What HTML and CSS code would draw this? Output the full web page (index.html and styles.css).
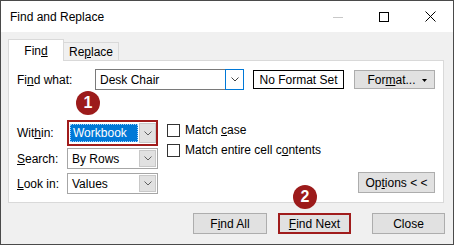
FILE: index.html
```html
<!DOCTYPE html>
<html>
<head>
<meta charset="utf-8">
<link rel="stylesheet" href="styles.css">
</head>
<body>
<div class="window">
  <div class="titlebar">
    <span class="title">Find and Replace</span>
    <div class="controls">
      <span class="ctl"><svg width="10" height="10" viewBox="0 0 10 10"><line x1="0" y1="5.5" x2="10" y2="5.5" stroke="#c8c8c8" stroke-width="1"/></svg></span>
      <span class="ctl"><svg width="10" height="10" viewBox="0 0 10 10"><rect x="0.5" y="0.5" width="9" height="9" fill="none" stroke="#000" stroke-width="1"/></svg></span>
      <span class="ctl"><svg width="11" height="11" viewBox="0 0 11 11"><path d="M0.5 0.5 L10.5 10.5 M10.5 0.5 L0.5 10.5" stroke="#000" stroke-width="1" fill="none"/></svg></span>
    </div>
  </div>
  <div class="body">
    <div class="tabs">
      <div class="tab active">Fin<u>d</u></div>
      <div class="tab">Re<u>p</u>lace</div>
    </div>
    <div class="panel">
      <div class="row1">
        <span class="lbl wide">Fi<u>n</u>d what:</span>
        <div class="combo findwhat">
          <span class="val">Desk Chair</span>
          <span class="arrow focus"><svg width="8" height="5" viewBox="0 0 8 5"><polyline points="0.5,0.5 4,4 7.5,0.5" fill="none" stroke="#404040" stroke-width="1"/></svg></span>
        </div>
        <div class="fmtset">No Format Set</div>
        <div class="btn fmt"><span>For<u>m</u>at...</span><svg class="caret" width="5" height="3" viewBox="0 0 5 3"><polygon points="0,0 5,0 2.5,3" fill="#000"/></svg></div>
      </div>
      <div class="row2">
        <div class="opts">
          <div class="optrow">
            <span class="lbl">Wit<u>h</u>in:</span>
            <div class="combo sel redframe">
              <span class="hl">Workbook</span>
              <span class="arrow"><svg width="8" height="5" viewBox="0 0 8 5"><polyline points="0.5,0.5 4,4 7.5,0.5" fill="none" stroke="#606060" stroke-width="1"/></svg></span>
            </div>
          </div>
          <div class="optrow search">
            <span class="lbl"><u>S</u>earch:</span>
            <div class="combo sel">
              <span class="val">By Rows</span>
              <span class="arrow"><svg width="8" height="5" viewBox="0 0 8 5"><polyline points="0.5,0.5 4,4 7.5,0.5" fill="none" stroke="#606060" stroke-width="1"/></svg></span>
            </div>
          </div>
          <div class="optrow lookin">
            <span class="lbl"><u>L</u>ook in:</span>
            <div class="combo sel">
              <span class="val">Values</span>
              <span class="arrow"><svg width="8" height="5" viewBox="0 0 8 5"><polyline points="0.5,0.5 4,4 7.5,0.5" fill="none" stroke="#606060" stroke-width="1"/></svg></span>
            </div>
          </div>
        </div>
        <div class="checks">
          <div class="check"><span class="box"></span><span>Match <u>c</u>ase</span></div>
          <div class="check"><span class="box"></span><span>Match entire cell c<u>o</u>ntents</span></div>
        </div>
        <div class="btn options">Op<u>t</u>ions &lt; &lt;</div>
      </div>
    </div>
    <div class="actions">
      <div class="btn act findall">F<u>i</u>nd All</div>
      <div class="btn act findnext"><u>F</u>ind Next</div>
      <div class="btn act close">Close</div>
    </div>
  </div>
  <div class="badge b1">1</div>
  <div class="badge b2">2</div>
</div>
</body>
</html>
```
FILE: styles.css
```css
* { box-sizing: border-box; }
html, body { margin: 0; padding: 0; background: #fff; }
body {
  font-family: "Liberation Sans", Arial, sans-serif;
  font-size: 12px;
  color: #000;
}
u { text-decoration: underline; text-underline-offset: 1px; }

.window {
  position: relative;
  width: 454px;
  height: 245px;
  border: 1px solid #4a4a4a;
  background: #f0f0f0;
  display: flex;
  flex-direction: column;
}

.titlebar {
  height: 31px;
  background: #fff;
  display: flex;
  align-items: center;
  justify-content: space-between;
  padding-left: 9px;
}
.title { font-size: 12px; }
.controls { display: flex; height: 31px; }
.ctl {
  width: 46px;
  height: 31px;
  display: flex;
  align-items: center;
  justify-content: center;
}

.body {
  padding: 7px 8px 0 7px;
  display: flex;
  flex-direction: column;
}

.tabs {
  display: flex;
  align-items: flex-end;
  height: 21px;
}
.tab {
  width: 56px;
  height: 18px;
  margin-left: -1px;
  border: 1px solid #d9d9d9;
  border-bottom: none;
  background: #f0f0f0;
  display: flex;
  align-items: center;
  justify-content: center;
  padding-top: 1px;
}
.tab.active {
  width: 56px;
  margin-left: 0;
  height: 22px;
  margin-bottom: -1px;
  background: #fff;
  position: relative;
  z-index: 1;
  padding-top: 0;
}

.panel {
  width: 436px;
  height: 143px;
  background: #fff;
  border: 1px solid #d9d9d9;
  padding: 8px 8px 0 8px;
}

.row1 {
  display: flex;
  align-items: center;
  height: 21px;
}
.lbl { width: 50px; flex: none; }
.lbl.wide { width: 78px; }

.combo {
  display: flex;
  height: 21px;
  border: 1px solid #a6a6a6;
  background: #fff;
  align-items: stretch;
}
.combo .val {
  flex: 1;
  display: flex;
  align-items: center;
  padding-left: 4px;
}
.combo .arrow {
  width: 18px;
  display: flex;
  align-items: center;
  justify-content: center;
  background: #e1e1e1;
  border-left: 1px solid #c4c4c4;
}
.findwhat { width: 149px; border-color: #7a7a7a; }
.findwhat .arrow {
  background: #fff;
  border: 1px solid #0078d7;
  margin: -1px -1px -1px 0;
  width: 19px;
}

.fmtset {
  margin-left: 9px;
  width: 91px;
  height: 19px;
  border: 1px solid #000;
  display: flex;
  align-items: center;
  justify-content: center;
}

.btn {
  background: #e1e1e1;
  border: 1px solid #adadad;
  display: flex;
  align-items: center;
  justify-content: center;
}
.fmt {
  margin-left: 10px;
  width: 81px;
  height: 19px;
  position: relative;
  padding-right: 6px;
}
.fmt .caret { position: absolute; right: 7px; top: 8px; }

.row2 {
  display: flex;
  margin-top: 30px;
}
.opts { display: flex; flex-direction: column; }
.optrow { display: flex; align-items: center; }
.optrow.search { margin-top: 2px; }
.optrow.lookin { margin-top: 4px; }
.sel { width: 91px; }
.sel .arrow { margin: 1px 1px 1px 0; border: 1px solid #c8c8c8; width: 17px; }

.redframe {
  height: 26px;
  border: 2px solid #a01c1c;
  padding: 2px 0 2px 1px;
}
.redframe .hl {
  flex: 1;
  background: #0078d7;
  color: #fff;
  display: flex;
  align-items: center;
  padding-left: 2px;
  border: 1px dotted #9fd0ff;
}
.redframe .arrow {
  margin: -1px 0 -1px 1px;
  width: 17px;
}

.checks {
  margin-left: 9px;
  display: flex;
  flex-direction: column;
}
.check {
  height: 20px;
  display: flex;
  align-items: center;
}
.check .box {
  width: 13px;
  height: 13px;
  border: 1px solid #333;
  background: #fff;
  margin-right: 5px;
}

.options {
  margin-left: auto;
  align-self: flex-end;
  margin-bottom: 1px;
  width: 77px;
  height: 21px;
}

.actions {
  display: flex;
  justify-content: flex-end;
  margin-top: 10px;
}
.act { height: 21px; }
.findall { width: 74px; }
.findnext { width: 73px; margin-left: 11px; border: 2px solid #a01c1c; }
.close { width: 73px; margin-left: 21px; }

.badge {
  position: absolute;
  width: 24px;
  height: 24px;
  border-radius: 50%;
  background: #9c1b1b;
  color: #fff;
  font-weight: bold;
  font-size: 16px;
  display: flex;
  align-items: center;
  justify-content: center;
}
.b1 { left: 75px; top: 90px; }
.b2 { left: 292px; top: 184px; }
```
